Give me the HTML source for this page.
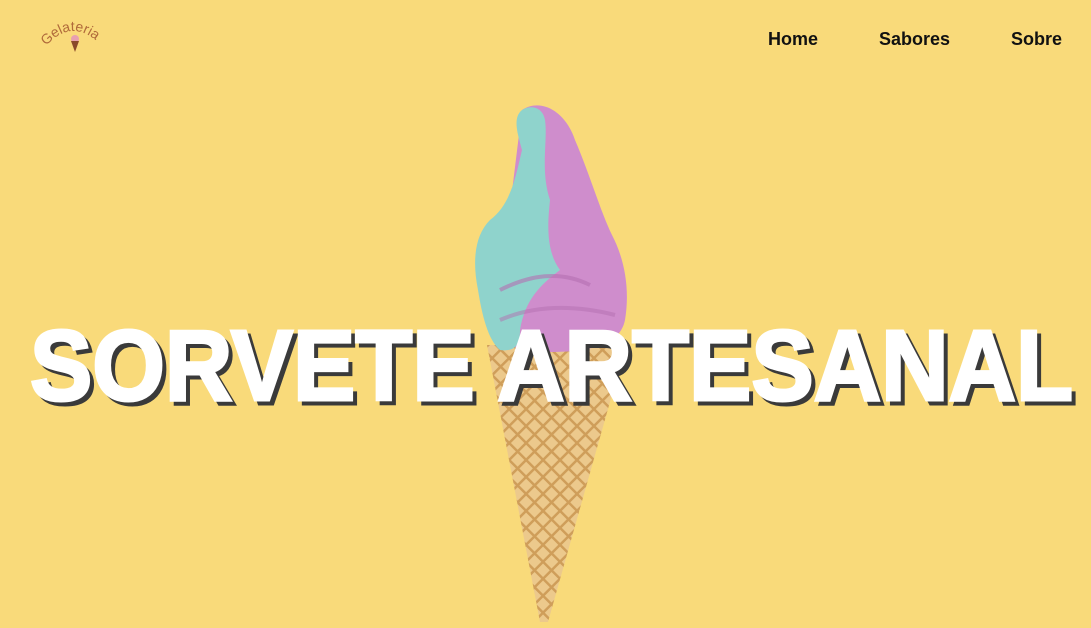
<!DOCTYPE html>
<html><head><meta charset="utf-8"><style>
html,body{margin:0;padding:0}
body{width:1091px;height:628px;background:#f9da7a;position:relative;overflow:hidden;font-family:"Liberation Sans",sans-serif}
.nav a{position:absolute;top:29px;font-size:18px;font-weight:bold;color:#111;text-decoration:none}
</style></head><body>
<svg width="1091" height="628" style="position:absolute;left:0;top:0">
  <defs>
    <pattern id="waf" width="12" height="12" patternUnits="userSpaceOnUse" patternTransform="rotate(45)">
      <rect width="12" height="12" fill="#ecc98c"/>
      <rect x="0" y="0" width="12" height="2.5" fill="#cf9e5a"/>
      <rect x="0" y="0" width="2.5" height="12" fill="#cf9e5a"/>
    </pattern>
    <path id="arc" d="M46 46 Q73 16 102 46"/>
  </defs>
  <!-- logo -->
  <text font-family="Liberation Sans" font-size="14" fill="#b06a3a"><textPath href="#arc">Gelateria</textPath></text>
  <circle cx="75" cy="39" r="4" fill="#e8a0b0"/>
  <path d="M71 41 L79 41 L75 52 Z" fill="#8a4a2a"/>
  <!-- cone -->
  <path d="M487 345 L626 345 L548 622 L540 622 Z" fill="url(#waf)"/>
  <!-- ice cream pink -->
  <path d="M522 110 C540 98 565 110 575 140 C590 175 600 210 612 235 C625 260 630 290 625 320 C620 345 590 352 550 352 C520 352 500 345 495 330 Z" fill="#cf8dcc"/>
  <!-- blue -->
  <path d="M522 110 C512 118 518 135 522 150 C515 180 510 205 490 220 C475 235 472 260 478 290 C482 315 488 340 500 350 C515 352 520 345 520 330 C525 300 540 285 560 270 C545 250 548 220 550 200 C540 170 548 140 545 120 C543 108 532 104 522 110 Z" fill="#8fd3cc"/>
  <path d="M500 290 C530 275 560 270 590 285" stroke="#b46fb0" stroke-width="4" fill="none" opacity=".6"/>
  <path d="M500 320 C535 305 575 305 615 315" stroke="#b46fb0" stroke-width="4" fill="none" opacity=".5"/>
  <!-- title -->
  <text x="34" y="404" font-family="Liberation Sans" font-weight="bold" font-size="100" fill="#3a3a3a" stroke="#3a3a3a" stroke-width="3" textLength="1043" lengthAdjust="spacingAndGlyphs">SORVETE ARTESANAL</text>
  <text x="30" y="400" font-family="Liberation Sans" font-weight="bold" font-size="100" fill="#fff" stroke="#fff" stroke-width="3" textLength="1043" lengthAdjust="spacingAndGlyphs">SORVETE ARTESANAL</text>
</svg>
<div class="nav">
  <a style="left:768px">Home</a>
  <a style="left:879px">Sabores</a>
  <a style="left:1011px">Sobre</a>
</div>
</body></html>
